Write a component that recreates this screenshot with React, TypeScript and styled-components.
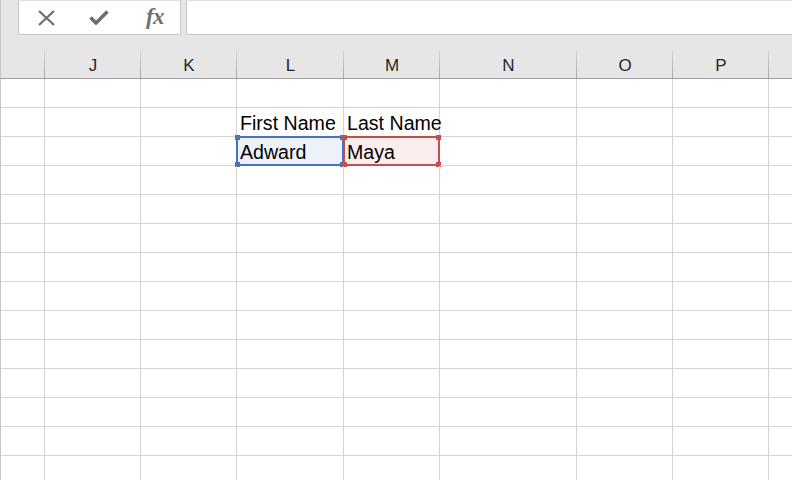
import React from 'react';
import styled, { createGlobalStyle } from 'styled-components';

const GlobalStyle = createGlobalStyle`
  html, body {
    margin: 0;
    padding: 0;
    background: #ffffff;
    overflow: hidden;
  }
  body {
    font-family: "Liberation Sans", Arial, sans-serif;
  }
`;

const columns = [
  { name: '', width: 44 },
  { name: 'J', width: 96 },
  { name: 'K', width: 96 },
  { name: 'L', width: 107 },
  { name: 'M', width: 96 },
  { name: 'N', width: 137 },
  { name: 'O', width: 96 },
  { name: 'P', width: 96 },
  { name: '', width: 60 },
];

const ROW_COUNT = 14;

type Mark = 'blue' | 'red';

const cellData: Record<string, { text: string; mark?: Mark }> = {
  '1-3': { text: 'First Name' },
  '1-4': { text: 'Last Name' },
  '2-3': { text: 'Adward', mark: 'blue' },
  '2-4': { text: 'Maya', mark: 'red' },
};

const markColors: Record<Mark, { line: string; fill: string }> = {
  blue: { line: '#4472c4', fill: '#edf2fa' },
  red: { line: '#c0504d', fill: '#fbeded' },
};

const Page = styled.div`
  width: 792px;
  height: 480px;
  display: flex;
  flex-direction: column;
  overflow: hidden;
  background: #ffffff;
`;

const TopBar = styled.div`
  flex: 0 0 50px;
  background: #e6e6e6;
  display: flex;
  align-items: flex-start;
  padding-left: 17px;
  gap: 5px;
  border-left: 1px solid #c6c6c6;
  box-sizing: border-box;
`;

const ActionBox = styled.div`
  width: 163px;
  height: 35px;
  box-sizing: border-box;
  background: #ffffff;
  border: 1px solid #c6c6c6;
  border-top-color: #e0e0e0;
  display: flex;
  align-items: center;
  padding-left: 16px;
  gap: 31px;
`;

const FormulaInput = styled.div`
  flex: 1;
  height: 35px;
  box-sizing: border-box;
  background: #ffffff;
  border: 1px solid #c6c6c6;
  border-top-color: #e0e0e0;
  border-right: none;
`;

const IconSlot = styled.div`
  width: 22px;
  height: 22px;
  display: flex;
  align-items: center;
  justify-content: center;
`;

const FxLabel = styled.span`
  font-family: "Liberation Serif", "Times New Roman", serif;
  font-style: italic;
  font-weight: bold;
  font-size: 23px;
  color: #707070;
  letter-spacing: -0.5px;
  line-height: 1;
  margin-left: 6px;
  margin-top: -2px;
`;

const HeaderRow = styled.div`
  flex: 0 0 29px;
  display: flex;
  background: #e6e6e6;
  border-bottom: 1px solid #9e9e9e;
  box-sizing: border-box;
  border-left: 1px solid #c6c6c6;
`;

const HeaderCell = styled.div<{ $w: number }>`
  flex: 0 0 auto;
  width: ${(p) => p.$w}px;
  min-width: 0;
  box-sizing: border-box;
  display: flex;
  align-items: center;
  justify-content: center;
  font-family: "Liberation Sans", Arial, sans-serif;
  font-size: 17px;
  color: #262626;
  padding-top: 4px;
  position: relative;
  &::after {
    content: '';
    position: absolute;
    right: 0;
    top: 0;
    bottom: 0;
    width: 1px;
    background: linear-gradient(#d6d6d6, #a8a8a8);
  }
`;

const Grid = styled.div`
  display: flex;
  flex-direction: column;
  border-left: 1px solid #c6c6c6;
  flex-shrink: 0;
`;

const Row = styled.div`
  display: flex;
  flex: 0 0 29px;
  height: 29px;
`;

const Cell = styled.div<{ $w: number }>`
  flex: 0 0 auto;
  width: ${(p) => p.$w}px;
  min-width: 0;
  box-sizing: border-box;
  border-right: 1px solid #d4d4d4;
  border-bottom: 1px solid #d4d4d4;
  position: relative;
  white-space: nowrap;
  overflow: visible;
  font-family: "Liberation Sans", Arial, sans-serif;
  font-size: 19.6px;
  color: #000000;
  line-height: 28px;
  padding-left: 3px;
  padding-top: 1px;
  z-index: 1;
`;

const Marker = styled.div<{ $mark: Mark }>`
  position: absolute;
  left: -1px;
  top: -1px;
  right: -1px;
  bottom: -1px;
  border: 2px solid ${(p) => markColors[p.$mark].line};
  background: ${(p) => markColors[p.$mark].fill};
  z-index: -1;
`;

const Handle = styled.span<{ $mark: Mark; $x: 'l' | 'r'; $y: 't' | 'b' }>`
  position: absolute;
  width: 5px;
  height: 5px;
  background: ${(p) => markColors[p.$mark].line};
  ${(p) => (p.$x === 'l' ? 'left: -3px;' : 'right: -3px;')}
  ${(p) => (p.$y === 't' ? 'top: -3px;' : 'bottom: -3px;')}
  z-index: 2;
`;

const CellText = styled.span`
  position: relative;
  z-index: 3;
`;

const CloseIcon = () => (
  <svg width="19" height="16" viewBox="0 0 19 16">
    <path d="M2 1 L17 15 M17 1 L2 15" stroke="#6e6e6e" strokeWidth="2.2" fill="none" />
  </svg>
);

const CheckIcon = () => (
  <svg width="20" height="15" viewBox="0 0 20 15">
    <path d="M1.5 7.5 L7 13 L18.5 1.5" stroke="#6e6e6e" strokeWidth="3.6" fill="none" strokeLinejoin="miter" />
  </svg>
);

export default function App() {
  return (
    <>
      <GlobalStyle />
      <Page>
        <TopBar>
          <ActionBox>
            <IconSlot>
              <CloseIcon />
            </IconSlot>
            <IconSlot>
              <CheckIcon />
            </IconSlot>
            <IconSlot>
              <FxLabel>fx</FxLabel>
            </IconSlot>
          </ActionBox>
          <FormulaInput />
        </TopBar>
        <HeaderRow>
          {columns.map((c, i) => (
            <HeaderCell key={i} $w={c.width}>
              {c.name}
            </HeaderCell>
          ))}
        </HeaderRow>
        <Grid>
          {Array.from({ length: ROW_COUNT }).map((_, r) => (
            <Row key={r}>
              {columns.map((c, ci) => {
                const data = cellData[`${r}-${ci}`];
                const mark = data?.mark;
                return (
                  <Cell key={ci} $w={c.width}>
                    {mark && (
                      <Marker $mark={mark}>
                        <Handle $mark={mark} $x="l" $y="t" />
                        <Handle $mark={mark} $x="l" $y="b" />
                        <Handle $mark={mark} $x="r" $y="t" />
                        <Handle $mark={mark} $x="r" $y="b" />
                      </Marker>
                    )}
                    {data && <CellText>{data.text}</CellText>}
                  </Cell>
                );
              })}
            </Row>
          ))}
        </Grid>
      </Page>
    </>
  );
}
